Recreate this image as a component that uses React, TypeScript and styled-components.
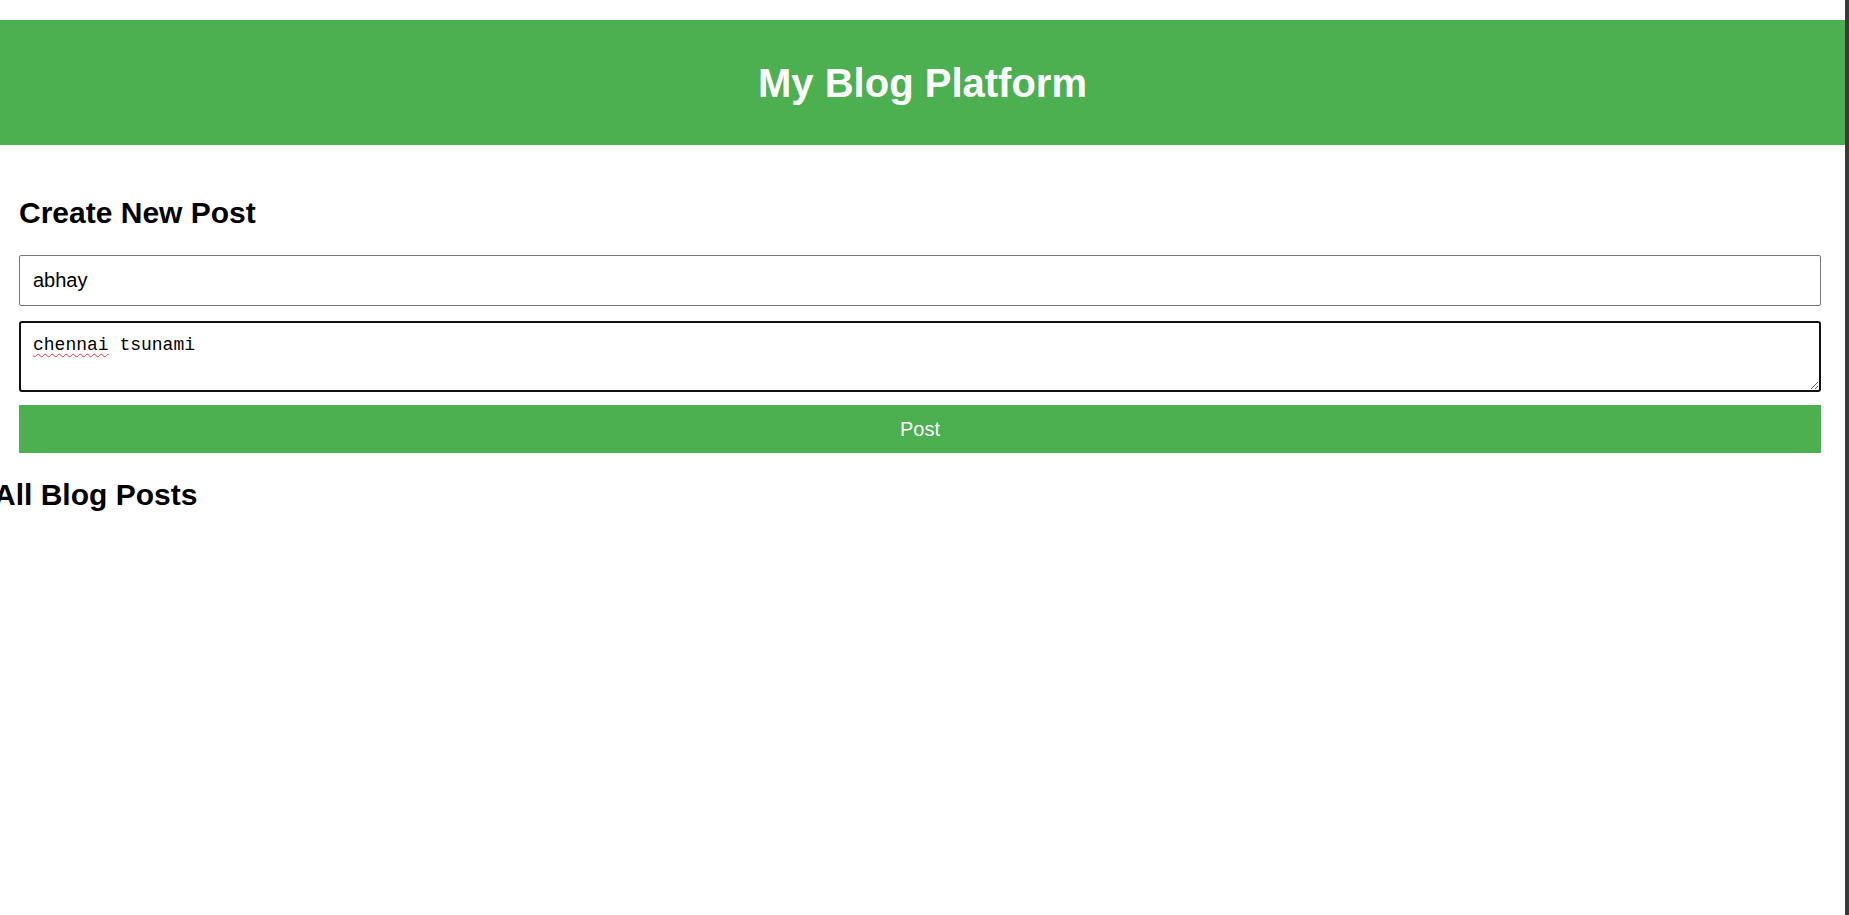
import React, { useState } from "react";
import styled, { createGlobalStyle } from "styled-components";

const GlobalStyle = createGlobalStyle`
  html, body {
    margin: 0;
    padding: 0;
    background: #ffffff;
  }
  body {
    font-family: "Liberation Sans", Arial, sans-serif;
    color: #000000;
    overflow: hidden;
  }
  * { box-sizing: border-box; }
`;

const Shell = styled.div`
  display: flex;
  min-height: 100vh;
  width: 100%;
`;

const Page = styled.div`
  flex: 1;
  min-width: 0;
  padding-top: 20px;
`;

const WindowEdge = styled.div`
  width: 4px;
  flex: none;
  background: #3a3a3a;
`;

const Header = styled.header`
  background: #4caf50;
  padding: 40px 0 39px;
  text-align: center;
`;

const Title = styled.h1`
  margin: 0;
  font-size: 40px;
  line-height: 46px;
  font-weight: 700;
  color: #ffffff;
`;

const FormSection = styled.section`
  display: flex;
  flex-direction: column;
  padding: 26px 24px 0 19px;
`;

const SectionTitle = styled.h2<{ $offset?: number }>`
  margin: 25px 0 25px ${(p) => p.$offset ?? 0}px;
  font-size: 30px;
  line-height: 34px;
  font-weight: 700;
`;

const TitleInput = styled.input`
  display: block;
  width: 100%;
  height: 51px;
  margin: 0 0 15px;
  padding: 0 13px;
  border: 1px solid #767676;
  border-radius: 2px;
  font-family: "Liberation Sans", Arial, sans-serif;
  font-size: 20px;
  color: #000000;
  background: #ffffff;
  outline: none;
`;

const AreaWrap = styled.div`
  position: relative;
  margin-bottom: 13px;
`;

const ContentArea = styled.textarea`
  display: block;
  width: 100%;
  height: 71px;
  margin: 0;
  padding: 11px 12px 12px;
  border: 2px solid #101010;
  border-radius: 3px;
  font-family: "Liberation Mono", "DejaVu Sans Mono", monospace;
  font-size: 18px;
  line-height: 22px;
  color: #000000;
  background: #ffffff;
  outline: none;
  resize: vertical;
`;

const SpellMark = styled.span`
  position: absolute;
  left: 14px;
  top: 13px;
  font-family: "Liberation Mono", "DejaVu Sans Mono", monospace;
  font-size: 18px;
  line-height: 22px;
  color: transparent;
  text-decoration: underline wavy #e53935;
  text-decoration-thickness: 1px;
  text-underline-offset: 3px;
  pointer-events: none;
  white-space: pre;
`;

const PostButton = styled.button`
  display: block;
  width: 100%;
  height: 48px;
  border: none;
  border-radius: 0;
  background: #4caf50;
  color: #ffffff;
  font-family: "Liberation Sans", Arial, sans-serif;
  font-size: 20px;
  cursor: pointer;
`;

const PostsSection = styled.section`
  display: flex;
  flex-direction: column;
`;

export default function App() {
  const [title, setTitle] = useState("abhay");
  const [content, setContent] = useState("chennai tsunami");

  return (
    <>
      <GlobalStyle />
      <Shell>
        <Page>
          <Header>
            <Title>My Blog Platform</Title>
          </Header>
          <FormSection>
            <SectionTitle>Create New Post</SectionTitle>
            <TitleInput value={title} onChange={(e) => setTitle(e.target.value)} />
            <AreaWrap>
              <ContentArea value={content} onChange={(e) => setContent(e.target.value)} spellCheck={false} />
              {content.startsWith("chennai") && <SpellMark>chennai</SpellMark>}
            </AreaWrap>
            <PostButton type="button">Post</PostButton>
          </FormSection>
          <PostsSection>
            <SectionTitle $offset={-6}>All Blog Posts</SectionTitle>
          </PostsSection>
        </Page>
        <WindowEdge />
      </Shell>
    </>
  );
}
